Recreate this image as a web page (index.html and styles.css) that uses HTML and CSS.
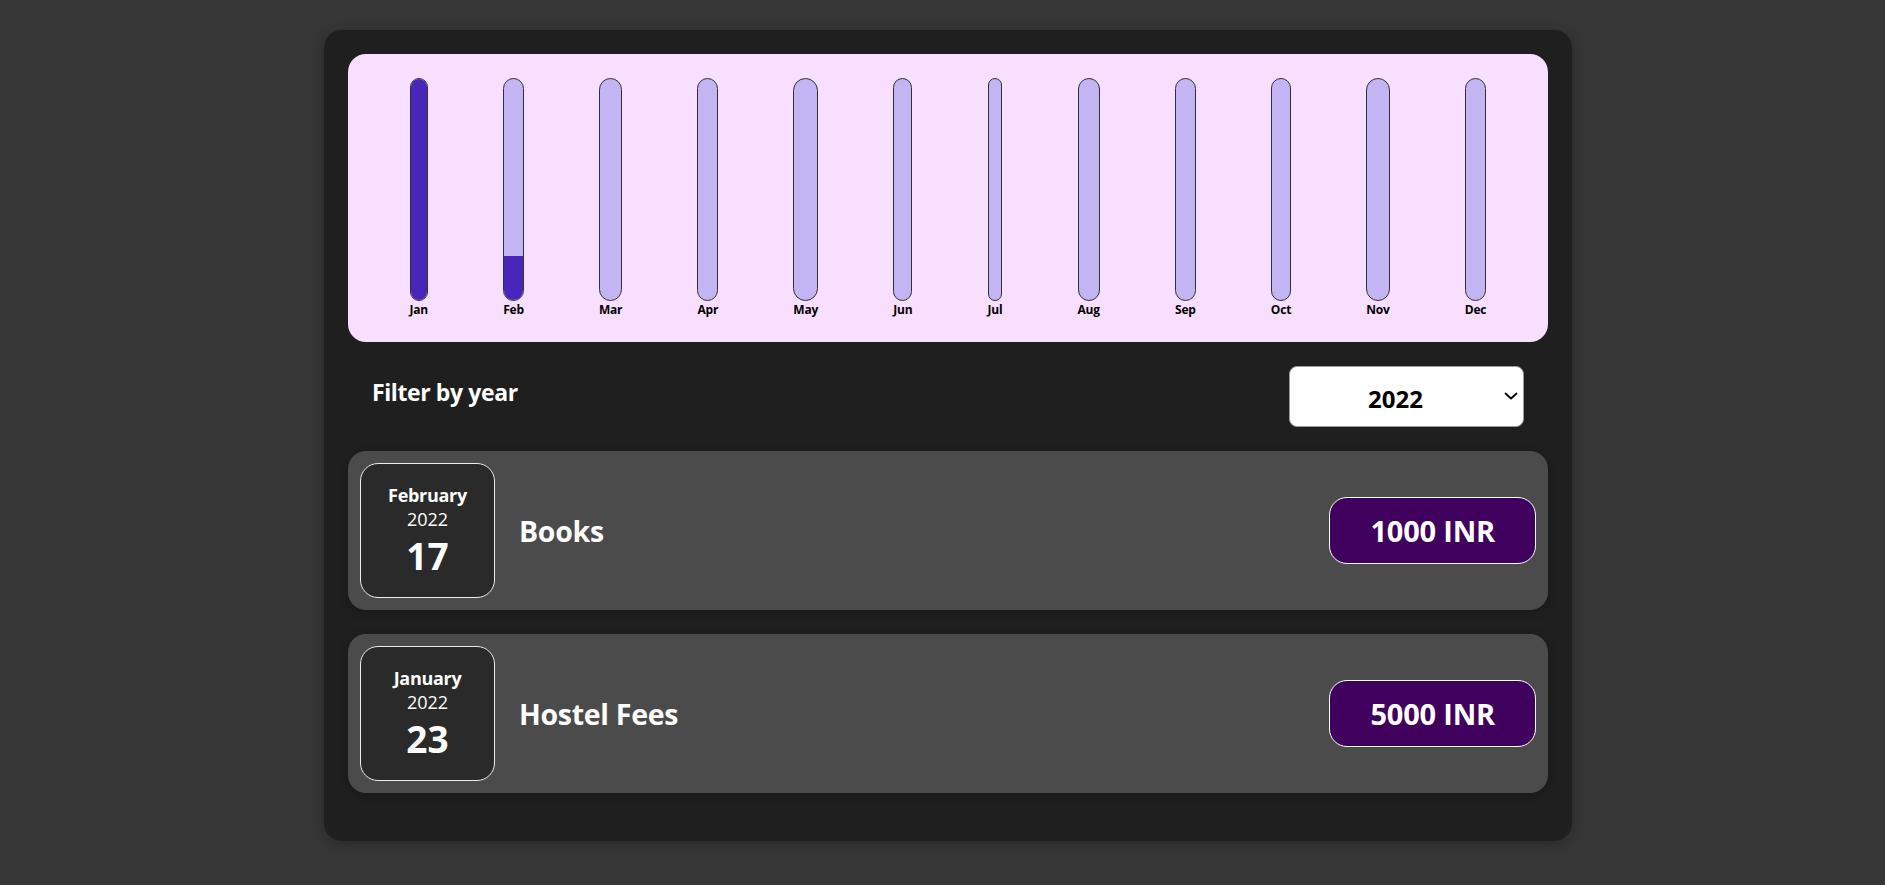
FILE: index.html
```html
<!DOCTYPE html>
<html lang="en">
<head>
<meta charset="utf-8">
<title>Expenses</title>
<link rel="stylesheet" href="styles.css">
</head>
<body>
<div class="page">
  <div class="expenses">
    <div class="chart">
      <div class="chart-bar"><div class="chart-bar__inner"><div class="chart-bar__fill" style="height:100%"></div></div><div class="chart-bar__label">Jan</div></div>
      <div class="chart-bar"><div class="chart-bar__inner"><div class="chart-bar__fill" style="height:20%"></div></div><div class="chart-bar__label">Feb</div></div>
      <div class="chart-bar"><div class="chart-bar__inner"><div class="chart-bar__fill" style="height:0%"></div></div><div class="chart-bar__label">Mar</div></div>
      <div class="chart-bar"><div class="chart-bar__inner"><div class="chart-bar__fill" style="height:0%"></div></div><div class="chart-bar__label">Apr</div></div>
      <div class="chart-bar"><div class="chart-bar__inner"><div class="chart-bar__fill" style="height:0%"></div></div><div class="chart-bar__label">May</div></div>
      <div class="chart-bar"><div class="chart-bar__inner"><div class="chart-bar__fill" style="height:0%"></div></div><div class="chart-bar__label">Jun</div></div>
      <div class="chart-bar"><div class="chart-bar__inner"><div class="chart-bar__fill" style="height:0%"></div></div><div class="chart-bar__label">Jul</div></div>
      <div class="chart-bar"><div class="chart-bar__inner"><div class="chart-bar__fill" style="height:0%"></div></div><div class="chart-bar__label">Aug</div></div>
      <div class="chart-bar"><div class="chart-bar__inner"><div class="chart-bar__fill" style="height:0%"></div></div><div class="chart-bar__label">Sep</div></div>
      <div class="chart-bar"><div class="chart-bar__inner"><div class="chart-bar__fill" style="height:0%"></div></div><div class="chart-bar__label">Oct</div></div>
      <div class="chart-bar"><div class="chart-bar__inner"><div class="chart-bar__fill" style="height:0%"></div></div><div class="chart-bar__label">Nov</div></div>
      <div class="chart-bar"><div class="chart-bar__inner"><div class="chart-bar__fill" style="height:0%"></div></div><div class="chart-bar__label">Dec</div></div>
    </div>

    <div class="expenses-filter">
      <div class="expenses-filter__control">
        <label class="filter-label" for="year">Filter by year</label>
        <div class="select-wrap">
          <select id="year" class="year-select">
            <option>2022</option>
            <option>2021</option>
            <option>2020</option>
            <option>2019</option>
          </select>
          <svg class="select-arrow" width="14" height="8" viewBox="0 0 14 8"><path d="M1.5 1.5 L7 6.5 L12.5 1.5" fill="none" stroke="#000" stroke-width="1.8" stroke-linecap="round" stroke-linejoin="round"/></svg>
        </div>
      </div>
    </div>

    <ul class="expenses-list">
      <li class="expense-item">
        <div class="expense-date">
          <div class="expense-date__month">February</div>
          <div class="expense-date__year">2022</div>
          <div class="expense-date__day">17</div>
        </div>
        <div class="expense-item__description">
          <h2 class="expense-item__title">Books</h2>
          <div class="expense-item__price">1000 INR</div>
        </div>
      </li>
      <li class="expense-item">
        <div class="expense-date">
          <div class="expense-date__month">January</div>
          <div class="expense-date__year">2022</div>
          <div class="expense-date__day">23</div>
        </div>
        <div class="expense-item__description">
          <h2 class="expense-item__title">Hostel Fees</h2>
          <div class="expense-item__price">5000 INR</div>
        </div>
      </li>
    </ul>
  </div>
</div>
</body>
</html>
```

FILE: styles.css
```css
* {
  box-sizing: border-box;
}

html, body {
  margin: 0;
  background-color: #363636;
}

body {
  font-family: "Open Sans", "Noto Sans", "Liberation Sans", sans-serif;
  min-height: 885px;
}

.page {
  padding: 30px 0 40px 11px;
}

.expenses {
  width: 1248px;
  margin: 0 auto;
  padding: 24px;
  background-color: #1f1f1f;
  border-radius: 18px;
  box-shadow: 0 2px 12px rgba(0, 0, 0, 0.25);
}

/* Chart */
.chart {
  height: 288px;
  padding: 24px;
  border-radius: 18px;
  background-color: #f8dfff;
  display: flex;
  justify-content: space-around;
  text-align: center;
}

.chart-bar {
  height: 100%;
  display: flex;
  flex-direction: column;
  align-items: center;
}

.chart-bar__inner {
  flex: 1;
  width: 100%;
  border: 1px solid #313131;
  border-radius: 18px;
  background-color: #c3b4f3;
  overflow: hidden;
  display: flex;
  flex-direction: column;
  justify-content: flex-end;
}

.chart-bar__fill {
  width: 100%;
  background-color: #4826b9;
}

.chart-bar__label {
  font-weight: 700;
  font-size: 12px;
  line-height: 17px;
  color: #000;
  letter-spacing: -0.2px;
}

/* Filter */
.expenses-filter {
  color: #fff;
  padding: 0 24px;
}

.expenses-filter__control {
  display: flex;
  width: 100%;
  align-items: center;
  justify-content: space-between;
  margin: 24px 0;
}

.filter-label {
  font-weight: 700;
  font-size: 23px;
  margin-bottom: 10px;
  letter-spacing: -0.4px;
}

.select-wrap {
  position: relative;
  width: 235px;
}

.year-select {
  appearance: none;
  -webkit-appearance: none;
  width: 100%;
  height: 61px;
  font-family: inherit;
  font-size: 24px;
  font-weight: 700;
  color: #000;
  background-color: #fff;
  padding: 3px 40px 0 78px;
  border: 1px solid #9a9a9a;
  border-radius: 8px;
  outline: none;
}

.select-arrow {
  position: absolute;
  right: 6px;
  top: 26px;
  pointer-events: none;
}

/* List */
.expenses-list {
  list-style: none;
  margin: 0;
  padding: 0;
}

.expense-item {
  display: flex;
  align-items: center;
  padding: 12px;
  margin: 24px 0;
  border-radius: 18px;
  background-color: #4b4b4b;
  box-shadow: 0 2px 8px rgba(0, 0, 0, 0.25);
}

.expense-date {
  width: 135px;
  height: 135px;
  flex-shrink: 0;
  display: flex;
  flex-direction: column;
  align-items: center;
  justify-content: center;
  padding-top: 5px;
  border: 1px solid #ececec;
  background-color: #2a2a2a;
  color: #fff;
  border-radius: 18px;
}

.expense-date__month {
  font-size: 18px;
  font-weight: 700;
  letter-spacing: -0.3px;
  line-height: 1.3;
}

.expense-date__year {
  font-size: 18px;
  font-weight: 400;
  line-height: 1.3;
}

.expense-date__day {
  font-size: 37px;
  font-weight: 700;
  line-height: 1.37;
}

.expense-item__description {
  flex: 1;
  display: flex;
  align-items: center;
  justify-content: space-between;
}

.expense-item__title {
  margin: 0 24px;
  font-size: 28.5px;
  font-weight: 700;
  color: #fff;
  flex: 1;
  letter-spacing: -0.3px;
}

.expense-item__price {
  font-size: 29px;
  font-weight: 700;
  color: #fff;
  background-color: #40005d;
  border: 1px solid #fff;
  padding: 13px 40px;
  border-radius: 18px;
  letter-spacing: -0.2px;
}
```
